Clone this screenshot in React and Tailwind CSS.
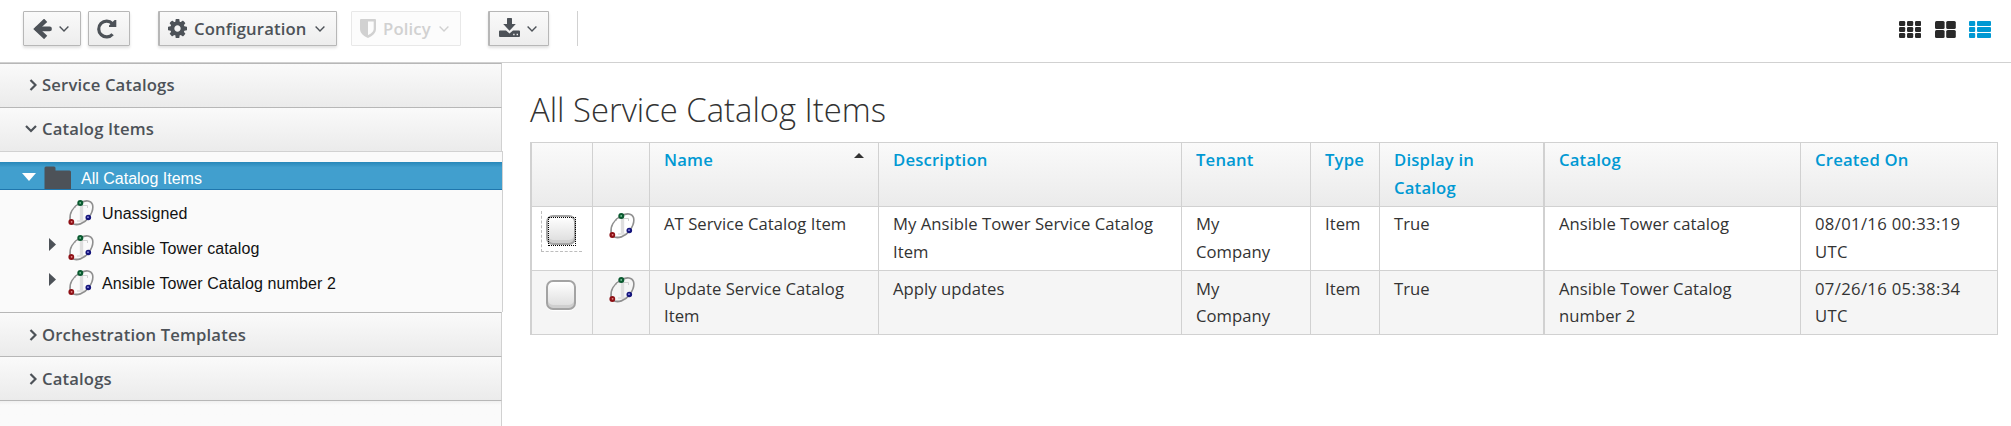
import React from 'react';

function AngleDown({ className = '' }) {
  return (
    <svg className={className} width="10" height="6" viewBox="0 0 10 6" fill="none" stroke="currentColor" strokeWidth="1.4">
      <path d="M0.6 0.6 L5 4.9 L9.4 0.6" />
    </svg>
  );
}

function BackIcon() {
  return (
    <svg width="20" height="20" viewBox="0 0 20 20" fill="none" stroke="currentColor" strokeWidth="4.6">
      <path d="M11 2.9 L3.6 9.9 L11 16.9" strokeLinecap="square" />
      <path d="M4 9.9 H16.6" strokeLinecap="round" />
    </svg>
  );
}

function ReloadIcon() {
  return (
    <svg width="20" height="20" viewBox="0 0 20 20">
      <path d="M15.4 4.6 A7.9 7.9 0 1 0 15.6 15.2" fill="none" stroke="currentColor" strokeWidth="3.2" />
      <path d="M19.3 1 V8 H12 V6.4 L17.6 1 Z" fill="currentColor" />
    </svg>
  );
}

function GearIcon() {
  return (
    <svg width="19" height="19" viewBox="128 128 1536 1536" fill="currentColor">
      <path d="M1152 896q0-106-75-181t-181-75-181 75-75 181 75 181 181 75 181-75 75-181zm512-109v222q0 12-8 23t-20 13l-185 28q-19 54-39 91 35 50 107 138 10 12 10 25t-9 23q-27 37-99 108t-94 71q-12 0-26-9l-138-108q-44 23-91 38-16 136-29 186-7 28-36 28h-222q-14 0-24.5-8.5t-11.5-21.5l-28-184q-49-16-90-37l-141 107q-10 9-25 9-14 0-25-11-126-114-165-168-7-10-7-23 0-12 8-23 15-21 51-66.5t54-70.5q-27-50-41-99l-183-27q-13-2-21-12.5t-8-23.5v-222q0-12 8-23t19-13l186-28q14-46 39-92-40-57-107-138-10-12-10-24 0-10 9-23 26-36 98.5-107.5t94.5-71.5q13 0 26 10l138 107q44-23 91-38 16-136 29-186 7-28 36-28h222q14 0 24.5 8.5t11.5 21.5l28 184q49 16 90 37l142-107q9-9 24-9 13 0 25 10 129 119 165 170 7 8 7 22 0 12-8 23-15 21-51 66.5t-54 70.5q26 50 41 98l183 28q13 2 21 12.5t8 23.5z" />
    </svg>
  );
}

function ShieldIcon() {
  return (
    <svg width="16" height="19" viewBox="0 0 16 19">
      <path
        fillRule="evenodd"
        fill="currentColor"
        d="M1 0 H15 Q16 0 16 1 V10 C16 14.5 12 17.2 8 19 C4 17.2 0 14.5 0 10 V1 Q0 0 1 0 Z M8 2.4 V16.2 C11 14.7 13.7 12.8 13.7 9.8 V2.4 Z"
      />
    </svg>
  );
}

function DownloadIcon() {
  return (
    <svg width="21" height="19" viewBox="0 0 21 19">
      <path fill="currentColor" d="M8 0.7 Q8 0 8.7 0 H12.3 Q13 0 13 0.7 V6 H16.8 L10.5 12.8 L4.2 6 H8 Z" />
      <path
        fillRule="evenodd"
        fill="currentColor"
        d="M1 12.6 H7 L10.5 15.4 L14 12.6 H20 Q21 12.6 21 13.6 V18 Q21 19 20 19 H1 Q0 19 0 18 V13.6 Q0 12.6 1 12.6 Z M14.2 15.8 V17.2 H15.6 V15.8 Z M17.6 15.8 V17.2 H19 V15.8 Z"
      />
    </svg>
  );
}

function CatalogIcon({ className = '' }) {
  return (
    <svg className={className} width="27" height="27" viewBox="0 0 27 27" fill="none">
      <path d="M8.5 9 V6.5 H20.500 V9 M10 22 H18.500" stroke="#d0d0d0" strokeWidth="1" />
      <path d="M14.500 7 V21.500" stroke="#dedede" strokeWidth="3.400" />
      <path d="M12.5 4 C6 8 1.8 14.5 3.2 21" stroke="#8f8f8f" strokeWidth="1.4" />
      <path d="M14 3.5 C19 0.8 24 1.5 25.5 5.5 C26.5 9.5 25 14 22 18" stroke="#8f8f8f" strokeWidth="1.6" />
      <path d="M5 24.5 C10 27 17 24.5 21 19.5" stroke="#8f8f8f" strokeWidth="1.8" />
      <circle cx="13.3" cy="4" r="3" fill="#0a5a30" />
      <circle cx="13.2" cy="3.9" r="0.9" fill="#7cc79b" />
      <circle cx="4.3" cy="23" r="2.9" fill="#8e1015" />
      <circle cx="4.6" cy="22.8" r="0.9" fill="#e58a8a" />
      <circle cx="21.3" cy="18.5" r="2.8" fill="#14147c" />
      <circle cx="21" cy="18.2" r="0.9" fill="#8f8fe0" />
    </svg>
  );
}

const BTN =
  'flex h-[35px] items-center border border-[#b7b7b7] bg-linear-to-b from-[#fafafa] to-[#ededed] text-[#4d5258] shadow-[0_2px_3px_rgba(3,3,3,0.12)] rounded-[1px]';

function Toolbar() {
  return (
    <div className="flex h-[63px] shrink-0 items-start border-b border-[#d1d1d1] bg-white pt-[11px] pl-[23px] text-[16.67px] font-semibold tracking-[0.15px]">
      <button className={`${BTN} w-[58px] pl-[9px]`}>
        <BackIcon />
        <AngleDown className="ml-[6px]" />
      </button>
      <button className={`${BTN} ml-[7px] w-[42px] pl-[8px]`}>
        <ReloadIcon />
      </button>
      <button className={`${BTN} ml-[28px] w-[179px] border-l-2 pl-[8px]`}>
        <GearIcon />
        <span className="ml-[7px]">Configuration</span>
        <AngleDown className="ml-[8px]" />
      </button>
      <button className="ml-[14px] flex h-[35px] w-[110px] items-center rounded-[1px] border border-[#e8e8e8] bg-[#fcfcfc] pl-[8px] text-[#d1d1d1]">
        <ShieldIcon />
        <span className="ml-[7px]">Policy</span>
        <AngleDown className="ml-[8px]" />
      </button>
      <button className={`${BTN} ml-[27px] w-[61px] border-l-2 pb-[3px] pl-[9px]`}>
        <DownloadIcon />
        <AngleDown className="mt-[4px] ml-[7px]" />
      </button>
      <div className="ml-[28px] h-[35px] w-px bg-[#d1d1d1]" />
      <div className="mt-[10px] mr-[20px] ml-auto flex">
        <svg width="22" height="17" viewBox="0 0 22 17" fill="#292929">
          {[0, 6, 12].map((y) => [0, 8, 16].map((x) => <rect key={`${x}-${y}`} x={x} y={y} width="6.2" height="4.9" rx="1.2" />))}
        </svg>
        <svg className="ml-[14px]" width="21" height="17" viewBox="0 0 21 17" fill="#292929">
          {[0, 9].map((y) => [0, 11.2].map((x) => <rect key={`${x}-${y}`} x={x} y={y} width="9.6" height="8" rx="1.5" />))}
        </svg>
        <svg className="ml-[13px]" width="22" height="17" viewBox="0 0 22 17" fill="#0099d3">
          {[0, 6, 12].map((y) => [
            <rect key={`a${y}`} x="0" y={y} width="6.2" height="4.9" rx="1" />,
            <rect key={`b${y}`} x="8" y={y} width="14" height="4.9" rx="1" />,
          ])}
        </svg>
      </div>
    </div>
  );
}

function AccordionHeader({ label, open, raised }) {
  return (
    <div
      className={`flex h-[44px] w-[502px] shrink-0 items-center border-t border-r border-t-[#b7b7b7] border-r-[#d1d1d1] bg-linear-to-b from-[#fafafa] to-[#ebebeb] text-[16.67px] font-semibold tracking-[0.15px] text-[#4d5258] ${raised ? 'pb-[2px]' : ''}`}
    >
      <span className="flex w-[42px] justify-end pr-[5px]">
        {open ? (
          <svg width="12" height="8" viewBox="0 0 12 8" fill="none" stroke="currentColor" strokeWidth="2.2">
            <path d="M1 1 L6 6 L11 1" />
          </svg>
        ) : (
          <svg width="8" height="12" viewBox="0 0 8 12" fill="none" stroke="currentColor" strokeWidth="2.2">
            <path d="M1.5 1 L6.5 6 L1.5 11" />
          </svg>
        )}
      </span>
      <span>{label}</span>
    </div>
  );
}

function TreeRow({ label, expandable }) {
  return (
    <div className="flex h-[35px] items-start pl-[49px]">
      <span className="mt-[7px] w-[18px]">
        {expandable && (
          <svg width="7" height="13" viewBox="0 0 7 13" fill="#4d5258">
            <path d="M0 0 L7 6.5 L0 13 Z" />
          </svg>
        )}
      </span>
      <CatalogIcon className="mt-[3px]" />
      <span className="ml-[8px] leading-[35px]">{label}</span>
    </div>
  );
}

function Sidebar() {
  return (
    <aside className="flex w-[503px] shrink-0 flex-col">
      <AccordionHeader label="Service Catalogs" raised />
      <AccordionHeader label="Catalog Items" open raised />
      <div className="h-[161px] w-[503px] shrink-0 border-t border-r border-[#d1d1d1] bg-[#fafafa] pt-[10px] font-['Liberation_Sans',sans-serif] text-[16px] tracking-[0.1px] text-[#111]">
        <div className="mb-[6px] flex h-[28px] items-start border-b border-[#1f76ad] bg-[#419fce] bg-linear-to-b from-[#2787b9] to-[#419fce] to-20% pl-[22px] text-white">
          <svg className="mt-[11px]" width="14" height="8" viewBox="0 0 14 8" fill="#fff">
            <path d="M0 0 H14 L7 8 Z" />
          </svg>
          <svg className="mt-[4px] ml-[8px]" width="27" height="23" viewBox="0 0 27 23" fill="#4d5258">
            <path d="M0.5 2 Q0.5 0.5 2 0.5 H10 Q11.5 0.5 11.5 2 V4.5 H25.5 Q27 4.5 27 6 V23 H0.5 Z" />
          </svg>
          <span className="ml-[10px] pt-[5px] leading-[23px] tracking-[0px]">All Catalog Items</span>
        </div>
        <TreeRow label="Unassigned" />
        <TreeRow label="Ansible Tower catalog" expandable />
        <TreeRow label="Ansible Tower Catalog number 2" expandable />
      </div>
      <AccordionHeader label="Orchestration Templates" />
      <AccordionHeader label="Catalogs" />
      <div className="w-[502px] flex-1 border-t border-r border-t-[#b7b7b7] border-r-[#d1d1d1] bg-[#fafafa] bg-linear-to-b from-[#f0f0f0] to-[#fafafa] to-[4px]" />
    </aside>
  );
}

function Checkbox({ focused }) {
  const box = (
    <span className="block size-[30px] rounded-[7px] border-2 border-[#a3a3a3] bg-linear-to-b from-white to-[#dcdcdc] shadow-[inset_0_-3px_0_#cfcfcf,0_1px_1px_#fff]" />
  );
  if (!focused) return <div className="pt-[9px] pl-[14px]">{box}</div>;
  return (
    <div className="pt-[4px] pl-[9px]">
      <div className="size-[41px] border-b border-l border-dashed border-[#bdbdbd] pt-[4px] pl-[4px]">
        <div className="relative size-[30px]">
          {box}
          <span className="absolute top-[2px] left-[2px] h-[29px] w-[28px] border border-dotted border-black" />
        </div>
      </div>
    </div>
  );
}

const COLUMNS = ['', '', 'Name', 'Description', 'Tenant', 'Type', 'Display in Catalog', 'Catalog', 'Created On'];
const ROWS = [
  ['AT Service Catalog Item', 'My Ansible Tower Service Catalog Item', 'My Company', 'Item', 'True', 'Ansible Tower catalog', '08/01/16 00:33:19 UTC'],
  ['Update Service Catalog Item', 'Apply updates', 'My Company', 'Item', 'True', 'Ansible Tower Catalog number 2', '07/26/16 05:38:34 UTC'],
];
const GRID =
  'grid h-[64px] grid-cols-[62px_57px_229px_303px_129px_69px_164px_257px_198px] border-b border-[#d1d1d1]';

function cellBorder(i) {
  if (i === 0 || i === 7) return 'border-l-2';
  if (i === 8) return 'border-x';
  return 'border-l';
}

function CatalogTable() {
  return (
    <div className="mt-[14px] w-[1468px] border-t border-[#d1d1d1] text-[16.67px]">
      <div className={`${GRID} bg-linear-to-b from-[#fafafa] to-[#ebebeb] leading-[28px] font-semibold text-[#0099d3]`}>
        {COLUMNS.map((c, i) => (
          <div key={i} className={`${cellBorder(i)} flex justify-between border-[#d1d1d1] pt-[3px] pr-[14px] pl-[14px] tracking-[0.2px]`}>
            <span className={i === 6 ? 'w-[100px]' : 'whitespace-nowrap'}>{c}</span>
            {c === 'Name' && (
              <svg className="mt-[7px]" width="10" height="5" viewBox="0 0 10 5" fill="#333">
                <path d="M0 5 L5 0 L10 5 Z" />
              </svg>
            )}
          </div>
        ))}
      </div>
      {ROWS.map((row, r) => (
        <div key={r} className={`${GRID} text-[#333] ${r === 1 ? 'bg-[#f5f5f5] leading-[27px]' : 'bg-white leading-[28px]'}`}>
          <div className="border-l-2 border-[#d1d1d1]">
            <Checkbox focused={r === 0} />
          </div>
          <div className="border-l border-[#d1d1d1] pt-[5px] pl-[15px]">
            <CatalogIcon />
          </div>
          {row.map((t, i) => (
            <div
              key={i}
              className={`${cellBorder(i + 2)} border-[#d1d1d1] pr-[14px] pl-[14px] ${r === 1 ? 'pt-[4px]' : 'pt-[3px]'} ${i === 6 ? 'tracking-[0.34px]' : 'tracking-[0.04px]'}`}
            >
              {t}
            </div>
          ))}
        </div>
      ))}
    </div>
  );
}

export default function App() {
  return (
    <div className="flex h-[426px] w-[2011px] flex-col overflow-hidden bg-white font-['Open_Sans',sans-serif]">
      <Toolbar />
      <div className="flex min-h-0 flex-1">
        <Sidebar />
        <main className="flex-1 pt-[29px] pl-[27px]">
          <h1 className="text-[32.8px] leading-[36px] font-light text-[#333]">All Service Catalog Items</h1>
          <CatalogTable />
        </main>
      </div>
    </div>
  );
}
